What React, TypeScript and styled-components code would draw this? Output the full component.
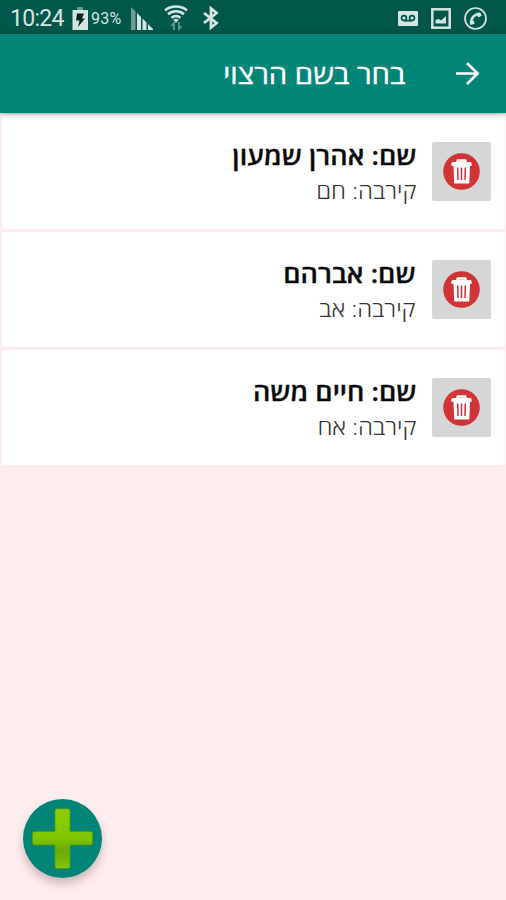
import React from "react";
import styled, { createGlobalStyle } from "styled-components";

const Global = createGlobalStyle`
  * { box-sizing: border-box; }
  body { margin: 0; background: #feecee; }
  button { border: 0; padding: 0; font: inherit; }
  svg { display: block; flex: none; }
`;

const Screen = styled.div`
  width: 506px;
  height: 900px;
  overflow: hidden;
  position: relative;
  background: #feecee;
  font-family: "Open Sans", "Noto Sans", sans-serif;
`;

const StatusBar = styled.header`
  height: 34px;
  display: flex;
  align-items: center;
  justify-content: space-between;
  padding: 2px 19px 0 10px;
  background: #00574a;
  color: #d5e5e2;
  font-family: Roboto, sans-serif;
`;

const StatusGroup = styled.div<{ $gap?: number }>`
  display: flex;
  align-items: center;
  gap: ${(p) => p.$gap ?? 0}px;
`;

const Clock = styled.span`
  width: 62px;
  padding-top: 1px;
  font-size: 23px;
  line-height: 32px;
  letter-spacing: -0.7px;
`;

const Percent = styled.span`
  width: 43px;
  padding: 2px 0 0 3px;
  font-size: 16px;
  line-height: 32px;
  letter-spacing: 0.3px;
`;

const AppBar = styled.nav`
  height: 79px;
  position: relative;
  display: flex;
  align-items: center;
  gap: 51px;
  padding-right: 27px;
  background: #008577;
  color: #fff;
  box-shadow: 0 1px 5px rgba(0, 0, 0, 0.38);
`;

const Title = styled.h1`
  margin: 0;
  font-size: 27.3px;
  font-weight: 400;
  line-height: 36px;
  white-space: nowrap;
  -webkit-text-stroke: 0.4px currentColor;
  transform: scaleX(1.075);
  transform-origin: right;
`;

const List = styled.main`
  display: flex;
  flex-direction: column;
  gap: 3px;
  padding: 1px 1px 0 2px;
`;

const Row = styled.article`
  height: 115px;
  display: flex;
  align-items: center;
  gap: 16px;
  padding-right: 14px;
  background: #fff;
`;

const DeleteButton = styled.button`
  width: 59px;
  height: 59px;
  display: flex;
  align-items: center;
  justify-content: center;
  border-radius: 2px;
  background: #d5d7d6;
`;

const Labels = styled.div`
  display: flex;
  flex-direction: column;
  padding-top: 2px;
  white-space: nowrap;
  transform: scaleX(1.08);
  transform-origin: right;
`;

const Name = styled.strong`
  font-size: 25px;
  font-weight: 600;
  line-height: 35px;
  letter-spacing: 0.05px;
  -webkit-text-stroke: 0.3px currentColor;
  color: #0a0a0a;
`;

const Relation = styled.span`
  font-size: 22.3px;
  font-weight: 300;
  line-height: 35px;
  color: #333;
`;

const AddButton = styled.button`
  position: absolute;
  left: 23px;
  top: 799px;
  width: 79px;
  height: 79px;
  display: flex;
  align-items: center;
  justify-content: center;
  border-radius: 50%;
  background: #008577;
  box-shadow: 0 6px 9px rgba(70, 30, 35, 0.25);
`;

const BatteryIcon = () => (
  <svg width="16" height="23" viewBox="0 0 16 23">
    <path d="M5 0h6v3H5z" fill="#6b988f" />
    <path d="M.5 3H16v20H.5z" fill="#d5e5e2" />
    <path d="M5 6.500h7l-2 5h3l-7 8.500 1.500-6.500H4z" fill="#002a22" />
  </svg>
);

const SignalIcon = () => (
  <svg width="22" height="23" viewBox="0 0 22 23">
    <path d="M0 0l4.500 4.500V23H0z" fill="#709b93" />
    <path d="M6 6l4 4v13H6zM11.500 11.500l4 4V23h-4zM17 17l5 5v1h-5z" fill="#d5e5e2" />
  </svg>
);

const WifiIcon = () => (
  <svg width="24" height="26" viewBox="0 0 24 26" fill="none">
    <path d="M1 5.500c6-5.200 16-5.200 22 0M4 9.300c4.500-4 11.500-4 16 0M7.500 12.800c2.800-2.300 6.200-2.300 9 0" stroke="#d5e5e2" strokeWidth="2.500" />
    <path d="M9.200 14.700q2.800-1.900 5.600 0L12 18z" fill="#d5e5e2" />
    <path d="M10 25v-7l-2.500 3M15 17v7l2.500-3" stroke="#6b988f" strokeWidth="1.700" />
  </svg>
);

const BluetoothIcon = () => (
  <svg width="24" height="24" viewBox="-4 0 24 24" fill="none" stroke="#d5e5e2" strokeWidth="2.800">
    <path d="M1 7l12.500 10-5.500 4.500v-19L13.500 7 1 17" />
  </svg>
);

const VoicemailIcon = () => (
  <svg width="20" height="15" viewBox="0 0 20 15">
    <rect width="20" height="15" rx="1" fill="#d5e5e2" />
    <g fill="none" stroke="#00574a" strokeWidth="1.700">
      <circle cx="6" cy="7" r="2.400" />
      <circle cx="14" cy="7" r="2.400" />
      <path d="M6 9.700h8" />
    </g>
  </svg>
);

const PictureIcon = () => (
  <svg width="20" height="21" viewBox="0 0 20 21">
    <rect x="1.300" y="1.300" width="17.400" height="18.400" fill="none" stroke="#d5e5e2" strokeWidth="2.500" />
    <path d="M4.500 15.500v-3.500l3-1 2.500 1.500 5-4.500v7.500z" fill="#d5e5e2" />
  </svg>
);

const CallIcon = () => (
  <svg width="23" height="23" viewBox="0 0 23 23" fill="none" stroke="#d5e5e2">
    <circle cx="11.500" cy="11.500" r="10.500" strokeWidth="1.700" />
    <path d="M7.300 17C6.500 11.500 10 7 16 6.700" strokeWidth="2.500" />
    <path d="M6.200 16.300l4-1.200M13.500 9l3.500-2" strokeWidth="3.600" />
  </svg>
);

const ArrowIcon = () => (
  <svg width="23" height="23" viewBox="0 0 23 23" fill="none" stroke="#fff" strokeWidth="2.700">
    <path d="M0 11.500h21M11 1l10.500 10.500L11 22" />
  </svg>
);

const TrashIcon = () => (
  <svg width="37" height="37" viewBox="0 0 37 37">
    <circle cx="18.500" cy="18.500" r="18.300" fill="#d13437" />
    <path d="M14.500 9V7.500h8V9" fill="none" stroke="#fff" strokeWidth="2.300" strokeLinejoin="round" />
    <path d="M10 9h17q1.700 0 1.700 1.700v2.100H27l-.7 17.700H11.200L10.500 12.800H8.300v-2.100Q8.300 9 10 9z" fill="#fff" />
    <path d="M14.700 14.500l.3 12.500M18.500 14.500V27M22.300 14.500L22 27" stroke="#c93036" strokeWidth="1.500" />
  </svg>
);

const PlusIcon = () => (
  <svg width="61" height="61" viewBox="0 0 61 61">
    <defs>
      <linearGradient id="plus-fill" x1="0" y1="0" x2="0" y2="1">
        <stop offset="0" stopColor="#8fce00" />
        <stop offset=".48" stopColor="#80c800" />
        <stop offset=".7" stopColor="#6da807" />
        <stop offset="1" stopColor="#80c700" />
      </linearGradient>
    </defs>
    <path d="M25 .8h11q2 0 2 2v20.700h20.500q2 0 2 2V35q0 2-2 2H38v21.500q0 2-2 2H25q-2 0-2-2V37H2.500q-2 0-2-2v-9.500q0-2 2-2H23V2.800q0-2 2-2z" fill="url(#plus-fill)" stroke="#4f9d1b" strokeWidth=".8" />
  </svg>
);

const people = [
  { name: "אהרן שמעון", relation: "חם" },
  { name: "אברהם", relation: "אב" },
  { name: "חיים משה", relation: "אח" },
];

export default function App() {
  return (
    <Screen>
      <Global />
      <StatusBar>
        <StatusGroup>
          <Clock>10:24</Clock>
          <BatteryIcon />
          <Percent>93%</Percent>
          <StatusGroup $gap={11}>
            <SignalIcon />
            <WifiIcon />
            <BluetoothIcon />
          </StatusGroup>
        </StatusGroup>
        <StatusGroup $gap={13}>
          <VoicemailIcon />
          <PictureIcon />
          <CallIcon />
        </StatusGroup>
      </StatusBar>
      <AppBar dir="rtl">
        <ArrowIcon />
        <Title>בחר בשם הרצוי</Title>
      </AppBar>
      <List dir="rtl">
        {people.map((p) => (
          <Row key={p.name}>
            <DeleteButton aria-label="מחק">
              <TrashIcon />
            </DeleteButton>
            <Labels>
              <Name>שם: {p.name}</Name>
              <Relation>קירבה: {p.relation}</Relation>
            </Labels>
          </Row>
        ))}
      </List>
      <AddButton aria-label="הוסף">
        <PlusIcon />
      </AddButton>
    </Screen>
  );
}
